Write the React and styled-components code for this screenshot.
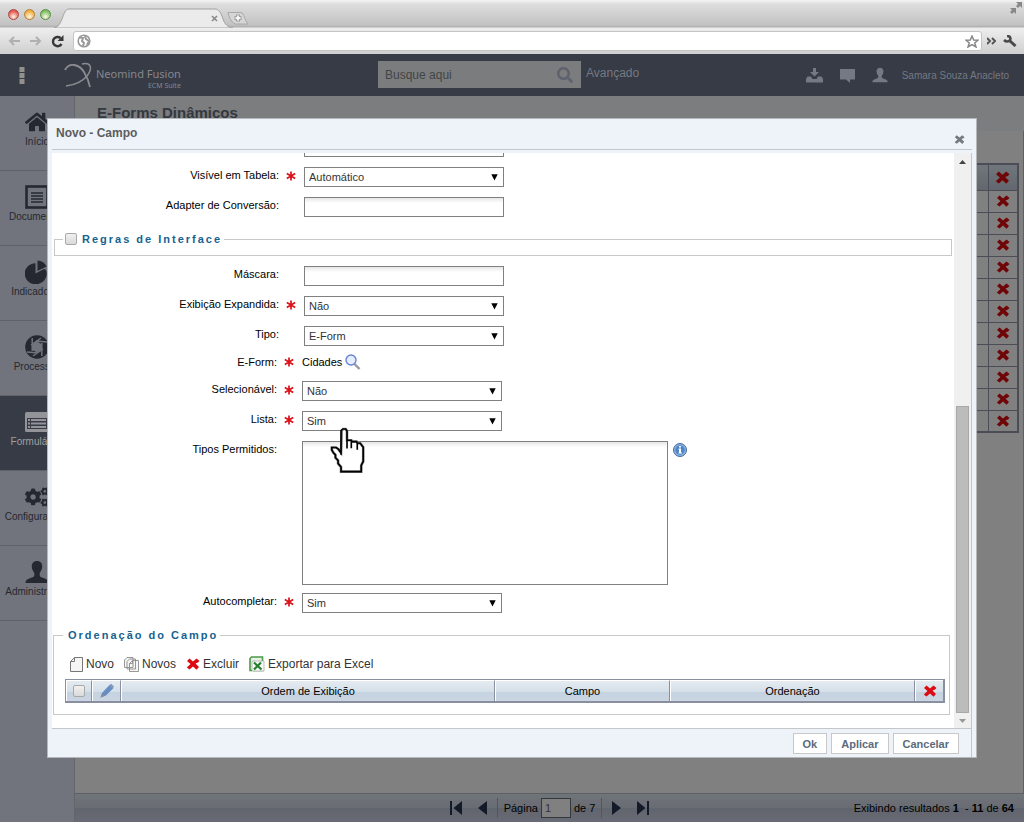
import React from "react";
import styled, { createGlobalStyle, css } from "styled-components";
import { FaSearch, FaHome, FaCogs } from "react-icons/fa";

const GlobalStyle = createGlobalStyle`
  *, *::before, *::after { box-sizing: border-box; }
  html, body { margin: 0; padding: 0; }
  body { font-family: "Liberation Sans", Arial, sans-serif; font-size: 11px; color: #000; background: #808080; }
  button, input, select, textarea { font: inherit; margin: 0; padding: 0; border-radius: 0; }
  svg { display: block; flex: none; }
`;

const Page = styled.div`
  position: relative;
  display: flex;
  flex-direction: column;
  min-height: 100vh;
`;

/* Browser frame */
const TabStrip = styled.div`
  display: flex;
  align-items: flex-end;
  height: 28px;
  padding-left: 8px;
  background: linear-gradient(#f4f4f4, #dedede 4px, #c2c2c2 25px, #adadad 27px, #f0f0f0 28px);
`;
const Lights = styled.div`
  display: flex;
  gap: 5px;
  padding-bottom: 8px;
`;
const Light = styled.span`
  width: 11px;
  height: 11px;
  border: 1px solid ${(p) => p.$edge};
  border-radius: 50%;
  background: radial-gradient(circle at 50% 75%, #fff8e8, ${(p) => p.$fill} 70%);
`;
const StripEnd = styled.div`
  margin-left: auto;
  align-self: flex-start;
  padding: 2px 2px 0 0;
`;
const Toolbar = styled.div`
  display: flex;
  align-items: center;
  height: 26px;
  padding: 0 3px 0 5px;
  background: linear-gradient(#eeeeee, #cfcfcf);
`;
const ToolButton = styled.button`
  display: flex;
  align-items: center;
  justify-content: center;
  width: ${(p) => p.$w || 23}px;
  height: 20px;
  border: 0;
  background: none;
  color: ${(p) => p.$color || "#b0b0b0"};
`;
const Address = styled.div`
  display: flex;
  flex: 1;
  align-items: center;
  height: 20px;
  margin-right: 3px;
  padding: 0 2px 0 3px;
  border: 1px solid #c4c4c4;
  border-radius: 3px;
  background: #fff;
`;
const AddressInput = styled.input`
  flex: 1;
  min-width: 0;
  border: 0;
  outline: 0;
  padding-left: 6px;
  background: transparent;
`;

/* Application header */
const Header = styled.header`
  display: grid;
  grid-template-columns: 378px 1fr auto;
  height: 42px;
  padding-right: 15px;
  background: #373b45;
  color: #7d8087;
`;
const Brand = styled.div`
  display: flex;
  align-items: center;
  padding-left: 19px;
`;
const LogoMark = styled.svg`
  margin-left: 39px;
`;
const BrandName = styled.div`
  display: flex;
  flex-direction: column;
  align-items: flex-end;
  padding: 8px 0 0 4px;
  font: 11px/14px "Noto Sans", sans-serif;
  color: #85878c;
  small { font-size: 7px; line-height: 10px; }
`;
const SearchArea = styled.form`
  display: flex;
  align-items: flex-start;
  padding-top: 7px;
`;
const SearchBox = styled.label`
  display: flex;
  align-items: center;
  width: 203px;
  height: 27px;
  padding: 0 8px 0 7px;
  background: #7b7c7e;
  color: #5d626e;
`;
const SearchInput = styled.input`
  flex: 1;
  min-width: 0;
  border: 0;
  background: transparent;
  font-size: 12px;
  &::placeholder { color: #444; opacity: 1; }
`;
const Advanced = styled.a`
  padding: 5px 0 0 5px;
  font-size: 12px;
  line-height: 14px;
  color: #747983;
  text-decoration: none;
`;
const UserArea = styled.div`
  display: flex;
  align-items: center;
  gap: 16px;
  font-size: 10px;
  color: #747983;
  > span { margin-left: -2px; }
`;

/* Main area */
const Main = styled.div`
  display: flex;
  flex: 1;
`;
const Sidebar = styled.nav`
  width: 75px;
  border-right: 1px solid #62656b;
  background: #71747c;
`;
const SideItem = styled.a`
  display: flex;
  flex-direction: column;
  align-items: center;
  height: 75px;
  padding-top: 14px;
  border-bottom: 1px solid #5f6268;
  background: ${(p) => (p.$active ? "#373b45" : "transparent")};
  color: ${(p) => (p.$active ? "#a0a0a0" : "#252830")};
  font-size: 10px;
  line-height: 12px;
  text-decoration: none;
  svg { margin-bottom: 2px; }
`;
const Content = styled.main`
  display: flex;
  flex: 1;
  flex-direction: column;
  min-width: 0;
`;
const PageTitle = styled.h1`
  height: 35px;
  margin: 0;
  padding: 8px 22px 0;
  background: #7c7d7e;
  font-size: 15px;
  line-height: 18px;
  color: #34383f;
`;
const Panel = styled.div`
  flex: 1;
  padding: 32px 4px 0 22px;
  border-right: 1px solid #606060;
`;
const BackTable = styled.table`
  width: 100%;
  border: 2px solid #4b4c55;
  border-collapse: collapse;
  table-layout: fixed;
  th, td { height: 22px; padding: 0; border: 1px solid #4b4c55; }
  th { height: 26px; background: linear-gradient(#70767b, #62676f); }
  svg { margin: auto; }
`;
const ActionCol = styled.col`
  width: 30px;
`;
const Pager = styled.footer`
  display: grid;
  grid-template-columns: 1fr auto 1fr;
  align-items: center;
  height: 29px;
  border-top: 1px solid #5c5f64;
  background: linear-gradient(#707579, #686c73 50%, #61656d 51%, #686a75);
`;
const PagerNav = styled.div`
  grid-column: 2;
  display: flex;
  align-items: center;
  gap: 2px;
`;
const PagerButton = styled.button`
  display: flex;
  justify-content: center;
  width: 24px;
  border: 0;
  background: none;
`;
const PageField = styled.label`
  display: flex;
  align-items: center;
  gap: 3px;
  height: 20px;
  padding: 0 6px;
  border: solid #525559;
  border-width: 0 1px;
`;
const PageInput = styled.input`
  width: 30px;
  height: 20px;
  padding-left: 3px;
  border: 1px solid #34373b;
  background: #808080;
  color: #333;
`;
const Results = styled.p`
  margin: 0;
  padding-right: 10px;
  text-align: right;
  white-space: pre;
`;

/* Dialog */
const Layer = styled.div`
  position: absolute;
  inset: 0;
  display: flex;
  padding: 118px 47px 64px;
`;
const Dialog = styled.section`
  display: flex;
  flex: 1;
  flex-direction: column;
  min-width: 0;
  padding: 0 4px;
  border: 1px solid #b4b8bb;
  background: #edf3f8;
`;
const DialogHead = styled.div`
  display: flex;
  justify-content: space-between;
  height: 31px;
  margin-bottom: 3px;
  padding: 6px 7px 0 4px;
  border-bottom: 1px solid #c3c7ca;
`;
const DialogTitle = styled.h2`
  margin: 0;
  font-size: 12px;
  line-height: 16px;
  color: #5c5c5c;
`;
const CloseButton = styled.button`
  align-self: flex-start;
  margin-top: 9px;
  border: 0;
  background: none;
`;
const DialogBody = styled.div`
  display: flex;
  flex: 1;
  min-height: 0;
  border-right: 1px solid #c3c7ca;
  background: #fff;
`;
const Form = styled.form`
  display: flex;
  flex: 1;
  flex-direction: column;
  justify-content: flex-end;
  min-width: 0;
  overflow: hidden;
  padding-bottom: 13px;
`;
const Scrollbar = styled.div`
  display: flex;
  flex-direction: column;
  align-items: center;
  width: 17px;
  padding: 7px 0 5px;
  background: #f0f0f0;
`;
const Thumb = styled.div`
  width: 13px;
  height: 307px;
  margin: auto 0 6px;
  border: 1px solid #a8a8a8;
  background: #bcbcbc;
`;
const DialogFoot = styled.div`
  display: flex;
  justify-content: flex-end;
  gap: 4px;
  height: 29px;
  padding: 4px 12px 0 0;
  border: solid #c3c7ca;
  border-width: 1px 1px 0 0;
`;
const FootButton = styled.button`
  height: 21px;
  padding: 0 9px;
  border: 1px solid #c8c8c8;
  background: #fff;
  color: #5b6b7b;
  font-weight: bold;
`;

/* Form rows */
const Row = styled.div`
  display: grid;
  flex: none;
  grid-template-columns: ${(p) => (p.$inner ? 225 : 227)}px 25px 1fr;
  align-items: start;
  height: ${(p) => p.$h || 30}px;
`;
const rowText = css`
  line-height: 16px;
  text-align: right;
`;
const Label = styled.label`${rowText}`;
const LabelText = styled.span`
  line-height: 12px;
  text-align: right;
`;
const Required = styled.svg`
  margin: ${(p) => (p.$tight ? 1 : 4)}px 0 0 7px;
`;
const Field = styled.div`
  position: relative;
  display: flex;
`;
const TextInput = styled.input`
  width: 200px;
  height: 20px;
  padding: 0 4px;
  border: 1px solid #808080;
  background: linear-gradient(#e6e6e6, #fff 5px);
`;
const Select = styled.select`
  width: 200px;
  height: 20px;
  padding: 0 4px;
  border: 1px solid #808080;
  appearance: none;
  background: #fff;
  color: #333;
`;
const SelectBox = styled.div`
  position: relative;
  width: 200px;
  > svg { position: absolute; top: 7px; right: 6px; pointer-events: none; }
`;
const TextArea = styled.textarea`
  width: 366px;
  height: 144px;
  border: 1px solid #808080;
  resize: none;
  background: linear-gradient(#e6e6e6, #fff 5px);
`;
const Picked = styled.div`
  display: flex;
  align-items: center;
  gap: 3px;
  height: 12px;
`;
const IconButton = styled.button`
  display: flex;
  border: 0;
  background: none;
`;
const InfoButton = styled(IconButton)`
  align-self: flex-start;
  margin: 2px 0 0 5px;
`;
const Hand = styled.svg`
  position: absolute;
  z-index: 2;
  top: 16px;
  left: 28px;
`;
const Group = styled.fieldset`
  flex: none;
  min-width: 0;
  margin: ${(p) => (p.$inner ? "4px 4px 0 1px" : "4px 2px 10px")};
  padding: ${(p) => (p.$inner ? "13px 4px 11px 11px" : "0 0 8px 8px")};
  border: 1px solid #c8c8c8;
`;
const Legend = styled.legend`
  display: flex;
  align-items: center;
  height: 16px;
  margin-left: ${(p) => (p.$inner ? -2 : 0)}px;
  padding-left: ${(p) => (p.$inner ? 5 : 2)}px;
  color: #15638f;
  font-weight: bold;
  letter-spacing: 2px;
  label { display: flex; align-items: center; gap: 5px; }
`;
const Check = styled.input`
  appearance: none;
  width: 12px;
  height: 12px;
  border: 1px solid #a8a8a8;
  border-radius: 2px;
  background: linear-gradient(#f0f0f0, #dadada);
`;
const Actions = styled.div`
  display: flex;
  gap: 10px;
  margin-bottom: 7px;
  padding-left: 5px;
`;
const Action = styled.button`
  display: flex;
  align-items: center;
  gap: 3px;
  height: 16px;
  border: 0;
  background: none;
  color: #333;
  font-size: 12px;
`;
const Grid = styled.table`
  width: 100%;
  border: 1px solid #8a8fa0;
  border-right-width: 2px;
  border-bottom-width: 2px;
  border-spacing: 0;
  table-layout: fixed;
  th {
    height: 21px;
    padding: 0;
    border-left: 1px solid #fff;
    border-right: 1px solid #8a8fa0;
    border-top: 1px solid #fff;
    background: linear-gradient(#e4ebf1, #d5dfe8 55%, #c5d2e0 56%, #cbd6e3);
    font-weight: normal;
  }
  th:last-child { border-right: 0; }
  svg, input { display: block; margin: auto; }
`;
const GridCol = styled.col`
  width: ${(p) => p.$w};
`;

const RedX = ({ color = "#dc0a12", size = 14 }) => (
  <svg width={size} height={size} viewBox="0 0 14 14" aria-hidden="true">
    <path d="M1 4 3.500 1.500 7 4.500 10.500 1.500 13.500 4 12 5.500 9.500 6.500 13 10 10.500 12.800 7 9.500 3.500 12.500 .8 10.500 4.500 7Z" fill={color} />
  </svg>
);
const Star = ({ tight }) => (
  <Required $tight={tight} width="10" height="10" viewBox="0 0 10 10" role="img" aria-label="obrigatório">
    <path d="M5 .5V9.500 M.8 2.600 9.200 7.400 M9.200 2.600 .8 7.400" stroke="#dc1018" strokeWidth="1.700" fill="none" />
  </Required>
);
const PersonIcon = ({ w = 16, h = 16 }) => (
  <svg width={w} height={h} viewBox="0 0 24 24" fill="currentColor" aria-hidden="true">
    <path d="M12 1c3.600 0 5.500 2.600 5.200 6-.3 3-1.500 4.500-2.500 6v2.500c0 1.500 2.300 2 5 3 2.300.8 3.800 1.600 3.800 4.500H.5c0-2.900 1.500-3.700 3.800-4.500 2.700-1 5-1.500 5-3V13c-1-1.500-2.200-3-2.500-6C6.500 3.600 8.400 1 12 1Z" />
  </svg>
);
const TrayIcon = () => (
  <svg width="17" height="15" viewBox="0 0 17 15" fill="currentColor" aria-hidden="true">
    <path d="M7 0h3v4H13L8.500 8.500 4 4h3Z" />
    <path d="M1.500 8.500H5L6.500 11h4L12 8.500h3.500L17 11V14.500H0V11Z" />
  </svg>
);
const BubbleIcon = () => (
  <svg width="17" height="15" viewBox="0 0 17 15" fill="currentColor" aria-hidden="true">
    <path d="M1 1.500Q1 1 1.500 1h14Q16 1 16 1.500V11.500h-5V15l-4-3.500H1.500Q1 11.500 1 11Z" />
  </svg>
);
const DocIcon = () => (
  <svg width="24" height="24" viewBox="0 0 24 24" fill="none" stroke="currentColor" strokeWidth="2.600" aria-hidden="true">
    <rect x="1.500" y="1.500" width="21" height="21" />
    <path d="M6 8h12M6 11h12M6 14h12M6 17h12" strokeWidth="1.600" />
  </svg>
);
const PieIcon = () => (
  <svg width="24" height="24" viewBox="0 0 24 24" fill="currentColor" aria-hidden="true">
    <path d="M10.500 3.200V13.500l8.500 -4.500 2 1A11 10.500 0 1 1 10.500 3.200Z" />
    <path d="M12.500 .5A10.500 10.500 0 0 1 21.500 6.500L12.500 11Z" />
  </svg>
);
const ShutterIcon = () => (
  <svg width="24" height="24" viewBox="-12 -12 24 24" aria-hidden="true">
    <circle r="11.800" fill="currentColor" />
    <path d="M0 -5.500 4.800 -2.800V2.800L0 5.500 -4.800 2.800V-2.800Z" fill="#71747c" />
    <path d="M-1 -6 10 -5M4.800 -4V9M6 2 -4 9M1 6 -10 5M-4.800 4V-9M-6 -2 4 -9" stroke="#71747c" strokeWidth="1.500" />
  </svg>
);
const ListIcon = () => (
  <svg width="24" height="24" viewBox="0 0 24 24" aria-hidden="true">
    <rect y="2" width="24" height="20" rx="1.500" fill="#92949a" />
    <path d="M2 8h20v11H2Z" fill="#373b45" />
    <path d="M3 10h2M6 10h15M3 13.500h2M6 13.500h15M3 17h2M6 17h15" stroke="#92949a" strokeWidth="1.800" />
  </svg>
);
const SheetIcon = () => (
  <svg width="13" height="15" viewBox="0 0 13 15" fill="#f5f5f5" stroke="#777" aria-hidden="true">
    <path d="M4.500 .5h8v14H.5V4.500ZM4.500 .5v4H.5" />
  </svg>
);
const SheetsIcon = () => (
  <svg width="15" height="15" viewBox="0 0 15 15" fill="#f5f5f5" stroke="#8c8c8c" strokeWidth=".9" aria-hidden="true">
    <path d="M3 .5h6v10H.5V3ZM5.500 2h6v10H3V4.500ZM8.500 3.500h6v11H5.500V6.500ZM8.500 3.500V6.500H5.500" />
  </svg>
);
const ExcelIcon = () => (
  <svg width="16" height="16" viewBox="0 0 16 16" aria-hidden="true">
    <path d="M2.500 1H13.500V14.500H1V2.500Z" fill="#e9f3e4" stroke="#4a9a48" strokeWidth="1.600" />
    <path d="M3 14.500V5h12v10H4" fill="#fafafa" stroke="#aaa" strokeWidth=".8" />
    <path d="M5 6.500 12.500 13.500M12 6.500 5 13.500" stroke="#23802b" strokeWidth="2.200" />
  </svg>
);
const PencilIcon = () => (
  <svg width="16" height="16" viewBox="0 0 16 16" aria-hidden="true">
    <path d="M1.500 14.500 3 10 10.500 2 14.500 5 7 12.500Z" fill="#668dc4" />
    <path d="M10 2.500 12 .8 15 3.500 13.500 5.500Z" fill="#8199bd" />
    <path d="M1.500 14.500 3 10.500 5.500 13Z" fill="#8d8d95" />
  </svg>
);
const MagnifierIcon = () => (
  <svg width="16" height="16" viewBox="0 0 16 16" fill="none" aria-hidden="true">
    <path d="M9.500 10 14.500 15" stroke="#9898a2" strokeWidth="2.400" />
    <circle cx="6" cy="6" r="5" fill="#e3efff" stroke="#6a82d6" strokeWidth="1.400" />
  </svg>
);
const InfoIcon = () => (
  <svg width="14" height="14" viewBox="0 0 14 14" aria-hidden="true">
    <circle cx="7" cy="7" r="6.500" fill="#8db4e0" stroke="#42699f" />
    <circle cx="7" cy="7" r="4.700" fill="#4d86c6" />
    <path d="M6 3h2v1.500H6ZM5.500 5.500H8v4h1v1H5.500v-1H6v-3h-.5Z" fill="#fff" />
  </svg>
);
const DownArrow = () => (
  <svg width="7" height="7" viewBox="0 0 7 7" aria-hidden="true"><path d="M.3 .3H6.700L3.500 6.500Z" /></svg>
);
const HandIcon = () => (
  <Hand width="36" height="47" viewBox="540 172 108 142" aria-hidden="true">
    <path d="M575 192V183L579 178H587L591 184V212H604L608 216H620L624 221H631L640 233V276L634 288V307H573V293L564 282V273L556 265V256L550 250L545 241V234H558L565 239L573 250Z" fill="#fff" stroke="#888" strokeWidth="8" />
    <path d="M573 256V183L579 178H587L591 184V237M591 212H604V236M604 216H620L622 221V241M622 221H631L640 233V276L634 288V307H573V293L564 282V273L556 265V256L550 250L545 241V234H558L565 239L573 250" fill="none" stroke="#000" strokeWidth="5" />
  </Hand>
);

const sideItems = [
  ["Início", <FaHome size={24} />],
  ["Documentos", <DocIcon />],
  ["Indicadores", <PieIcon />],
  ["Processos", <ShutterIcon />],
  ["Formulários", <ListIcon />],
  ["Configurações", <FaCogs size={24} />],
  ["Administração", <PersonIcon w={24} h={24} />],
];

function SelectRow({ id, label, value, required, inner, children }) {
  return (
    <Row $inner={inner}>
      <Label htmlFor={id}>{label}</Label>
      {required ? <Star /> : <span />}
      <Field>
        <SelectBox>
          <Select id={id} defaultValue={value}>
            <option>{value}</option>
          </Select>
          <DownArrow />
        </SelectBox>
        {children}
      </Field>
    </Row>
  );
}

function InputRow({ id, label }) {
  return (
    <Row>
      <Label htmlFor={id}>{label}</Label>
      <span />
      <TextInput id={id} type="text" />
    </Row>
  );
}

function BrowserFrame() {
  return (
    <>
      <TabStrip>
        <Lights>
          <Light $fill="#e5574f" $edge="#a84a45" />
          <Light $fill="#f0ad3c" $edge="#b08038" />
          <Light $fill="#7cc062" $edge="#5a8b4b" />
        </Lights>
        <svg width="198" height="20" viewBox="0 0 198 20" aria-hidden="true">
          <path d="M3 20C7 19 9 16 11 11S14 1 18 1H164C168 1 170 5 172 11S177 19 182 20Z" fill="#ebebeb" stroke="#a2a2a2" />
          <path d="M177 4.500H190C193 5 194 13 197 16H184C180 14 178 9 177 4.500Z" fill="#d6d6d6" stroke="#a8a8a8" />
          <path d="M161 8 166 13M166 8 161 13" stroke="#888" strokeWidth="1.600" />
          <path d="M187 6.500v7M183.500 10h7" stroke="#a0a0a0" strokeWidth="4" />
          <path d="M187 7.500v5M184.500 10h5" stroke="#f5f5f5" strokeWidth="2" />
        </svg>
        <StripEnd>
          <svg width="12" height="12" viewBox="0 0 12 12" fill="#888" aria-hidden="true">
            <path d="M6 0h6v6L10 4 8 6 6 4 8 2ZM0 6h6v6L4 10 2 12 0 10 2 8Z" />
          </svg>
        </StripEnd>
      </TabStrip>
      <Toolbar>
        <ToolButton $w={18} aria-label="Voltar">
          <svg width="12" height="10" viewBox="0 0 12 10" fill="none" stroke="currentColor" strokeWidth="2"><path d="M12 5H2M6 1 2 5 6 9" /></svg>
        </ToolButton>
        <ToolButton $w={26} aria-label="Avançar">
          <svg width="12" height="10" viewBox="0 0 12 10" fill="none" stroke="currentColor" strokeWidth="2"><path d="M0 5H10M6 1 10 5 6 9" /></svg>
        </ToolButton>
        <ToolButton $w={24} $color="#383838" aria-label="Recarregar">
          <svg width="20" height="13" viewBox="0 0 20 13" fill="none" stroke="currentColor" strokeWidth="2.400"><path d="M10.500 9A4.600 4.600 0 1 1 9.500 3" /><path d="M12.500 0V6H6.500Z" fill="currentColor" stroke="none" /></svg>
        </ToolButton>
        <Address>
          <svg width="14" height="14" viewBox="0 0 14 14" fill="none" stroke="#999" strokeWidth="1.600" aria-hidden="true"><circle cx="7" cy="7" r="5.800" /><path d="M3 3.500 6 4 5 7 7 9 6 12M8 2 9 5 12 7 10 11" strokeWidth="2" /></svg>
          <AddressInput type="text" aria-label="Endereço" />
          <svg width="14" height="13" viewBox="0 0 14 13" fill="none" stroke="#888" strokeWidth="1.500" aria-hidden="true"><path d="M7 1 8.700 5 13 5.200 9.700 8 11 12 7 9.700 3 12 4.300 8 1 5.200 5.300 5Z" /></svg>
        </Address>
        <ToolButton $w={13} $color="#555" aria-label="Mais">
          <svg width="9" height="8" viewBox="0 0 9 8" fill="none" stroke="currentColor" strokeWidth="2"><path d="M0 1 3 4 0 7M5 1 8 4 5 7" /></svg>
        </ToolButton>
        <ToolButton $w={23} $color="#4a4a4a" aria-label="Ferramentas">
          <svg width="14" height="12" viewBox="0 0 14 12" fill="none" stroke="currentColor"><path d="M6.500 5.500 12.500 11" strokeWidth="3" /><path d="M4 1C7 1 8 3 7 5S3 7 1 5" strokeWidth="2.600" /></svg>
        </ToolButton>
      </Toolbar>
    </>
  );
}

function FieldDialog() {
  return (
    <Dialog role="dialog" aria-label="Novo - Campo">
      <DialogHead>
        <DialogTitle>Novo - Campo</DialogTitle>
        <CloseButton aria-label="Fechar"><RedX color="#76797d" size={11} /></CloseButton>
      </DialogHead>
      <DialogBody>
        <Form>
          <Row><span /><span /><TextInput type="text" aria-label="Campo anterior" /></Row>
          <SelectRow id="visivel" label="Visível em Tabela:" value="Automático" required />
          <InputRow id="adapter" label="Adapter de Conversão:" />
          <Group>
            <Legend><label><Check type="checkbox" />Regras de Interface</label></Legend>
          </Group>
          <InputRow id="mascara" label="Máscara:" />
          <SelectRow id="expandida" label="Exibição Expandida:" value="Não" required />
          <SelectRow id="tipo" label="Tipo:" value="E-Form" />
          <Row $inner $h={25}>
            <LabelText>E-Form:</LabelText>
            <Star tight />
            <Picked>Cidades <IconButton type="button" aria-label="Buscar E-Form"><MagnifierIcon /></IconButton></Picked>
          </Row>
          <SelectRow id="selecionavel" label="Selecionável:" value="Não" required inner />
          <SelectRow id="lista" label="Lista:" value="Sim" required inner><HandIcon /></SelectRow>
          <Row $inner $h={152}>
            <Label htmlFor="tipos">Tipos Permitidos:</Label>
            <span />
            <Field>
              <TextArea id="tipos" />
              <InfoButton type="button" aria-label="Informações"><InfoIcon /></InfoButton>
            </Field>
          </Row>
          <SelectRow id="auto" label="Autocompletar:" value="Sim" required inner />
          <Group $inner>
            <Legend $inner>Ordenação do Campo</Legend>
            <Actions>
              <Action type="button"><SheetIcon />Novo</Action>
              <Action type="button"><SheetsIcon />Novos</Action>
              <Action type="button"><RedX />Excluir</Action>
              <Action type="button"><ExcelIcon />Exportar para Excel</Action>
            </Actions>
            <Grid>
              <colgroup>
                <GridCol $w="26px" /><GridCol $w="29px" /><GridCol $w="auto" /><GridCol $w="175px" /><GridCol $w="245px" /><GridCol $w="28px" />
              </colgroup>
              <thead>
                <tr>
                  <th><Check type="checkbox" aria-label="Selecionar todos" /></th>
                  <th><PencilIcon /></th>
                  <th>Ordem de Exibição</th>
                  <th>Campo</th>
                  <th>Ordenação</th>
                  <th><RedX /></th>
                </tr>
              </thead>
            </Grid>
          </Group>
        </Form>
        <Scrollbar>
          <svg width="7" height="4" viewBox="0 0 7 4" aria-hidden="true"><path d="M0 4 3.500 0 7 4Z" fill="#444" /></svg>
          <Thumb />
          <svg width="7" height="4" viewBox="0 0 7 4" aria-hidden="true"><path d="M0 0H7L3.500 4Z" fill="#999" /></svg>
        </Scrollbar>
      </DialogBody>
      <DialogFoot>
        <FootButton>Ok</FootButton>
        <FootButton>Aplicar</FootButton>
        <FootButton>Cancelar</FootButton>
      </DialogFoot>
    </Dialog>
  );
}

export default function App() {
  return (
    <Page>
      <GlobalStyle />
      <BrowserFrame />
      <Header>
        <Brand>
          <svg width="6" height="17" viewBox="0 0 6 17" fill="#92918d" aria-hidden="true"><path d="M.5 0h5v5h-5ZM.5 6h5v5h-5ZM.5 12h5v5h-5Z" /></svg>
          <LogoMark width="28" height="26" viewBox="0 0 28 26" fill="none" stroke="#8a8c90" aria-hidden="true">
            <path d="M1 8C5 0 15 2 20 10C23 15 25 20 26 25" strokeWidth="1.800" />
            <path d="M18 2C27 0 29 6 23 14C18 20 10 23 2 24" strokeWidth="1.500" />
          </LogoMark>
          <BrandName>Neomind Fusion<small>ECM Suite</small></BrandName>
        </Brand>
        <SearchArea>
          <SearchBox>
            <SearchInput type="text" placeholder="Busque aqui" aria-label="Busque aqui" />
            <FaSearch size={16} />
          </SearchBox>
          <Advanced href="#">Avançado</Advanced>
        </SearchArea>
        <UserArea>
          <TrayIcon />
          <BubbleIcon />
          <PersonIcon />
          <span>Samara Souza Anacleto</span>
        </UserArea>
      </Header>
      <Main>
        <Sidebar>
          {sideItems.map(([name, icon]) => (
            <SideItem key={name} href="#" $active={name === "Formulários"}>{icon}{name}</SideItem>
          ))}
        </Sidebar>
        <Content>
          <PageTitle>E-Forms Dinâmicos</PageTitle>
          <Panel>
            <BackTable>
              <colgroup><col /><ActionCol /></colgroup>
              <thead><tr><th /><th><RedX color="#700508" size={15} /></th></tr></thead>
              <tbody>
                {Array.from({ length: 11 }, (_, i) => (
                  <tr key={i}><td /><td><RedX color="#700508" /></td></tr>
                ))}
              </tbody>
            </BackTable>
          </Panel>
          <Pager>
            <PagerNav>
              <PagerButton aria-label="Primeira página"><svg width="13" height="14" viewBox="0 0 13 14" fill="#151a28"><path d="M0 0h2v14H0ZM12 0V14L3.500 7Z" /></svg></PagerButton>
              <PagerButton aria-label="Página anterior"><svg width="9" height="14" viewBox="0 0 9 14" fill="#151a28"><path d="M9 0V14L0 7Z" /></svg></PagerButton>
              <PageField>Página<PageInput type="text" defaultValue="1" />de 7</PageField>
              <PagerButton aria-label="Próxima página"><svg width="9" height="14" viewBox="0 0 9 14" fill="#151a28"><path d="M0 0V14L9 7Z" /></svg></PagerButton>
              <PagerButton aria-label="Última página"><svg width="13" height="14" viewBox="0 0 13 14" fill="#151a28"><path d="M11 0h2v14h-2ZM1 0V14L9.500 7Z" /></svg></PagerButton>
            </PagerNav>
            <Results>Exibindo resultados <b>1</b>  - <b>11</b> de <b>64</b></Results>
          </Pager>
        </Content>
      </Main>
      <Layer><FieldDialog /></Layer>
    </Page>
  );
}
